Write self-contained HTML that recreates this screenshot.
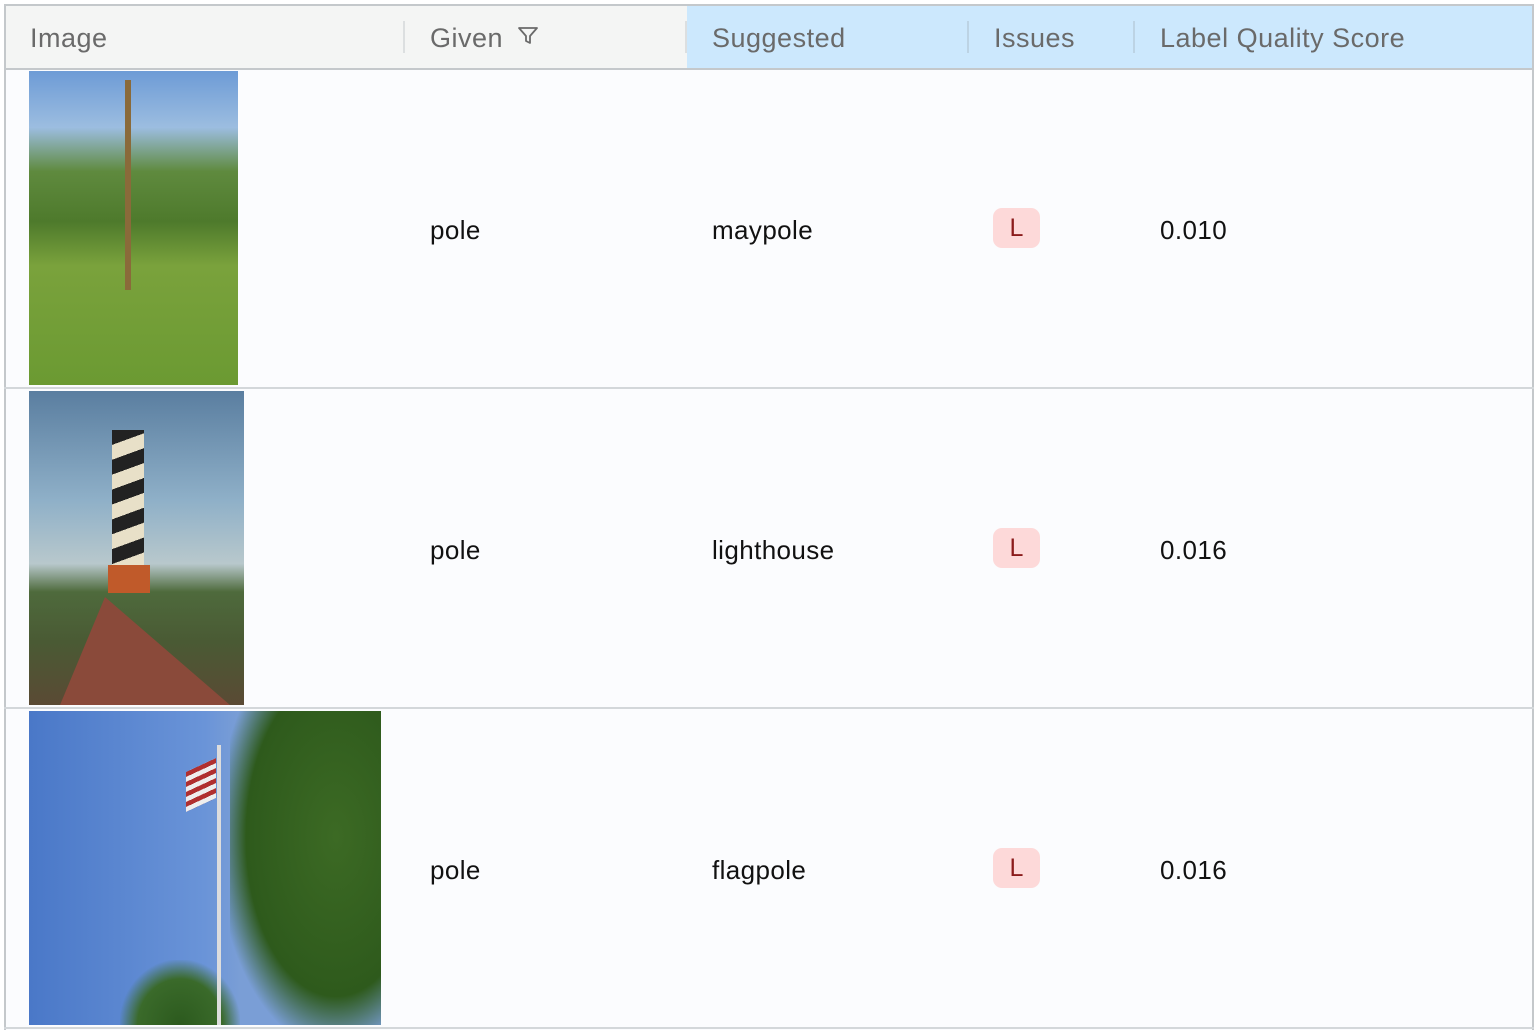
<!DOCTYPE html>
<html><head><style>
body{margin:0;width:1538px;height:1032px;background:#fff;font-family:"Liberation Sans",sans-serif;position:relative;overflow:hidden}
.a{position:absolute}
.h{font-size:27px;color:#6a6a6a;top:23px;letter-spacing:0.5px}
.t{font-size:26px;color:#111;letter-spacing:0.4px}
.badge{position:absolute;left:993px;width:47px;height:40px;background:#fdd9d9;border-radius:9px;color:#8b1c1c;font-size:25px;text-align:center;line-height:40px}
.sep{position:absolute;top:21px;width:2px;height:32px;background:#dcdfe0}
.hl{position:absolute;left:4px;width:1530px;height:2px;background:#d3d7da}
</style></head><body>
<div class="a" style="left:4px;top:4px;width:1530px;height:1026px;background:#fbfcfe;border-left:2px solid #c4c8cb;border-right:2px solid #c4c8cb;border-top:2px solid #c4c8cb;box-sizing:border-box"></div>
<div class="a" style="left:6px;top:6px;width:681px;height:63px;background:#f4f5f4"></div>
<div class="a" style="left:687px;top:6px;width:845px;height:63px;background:#cce8fd"></div>
<div class="hl" style="top:68px;background:#c4c8cb"></div>
<div class="sep" style="left:403px"></div>
<div class="sep" style="left:685px"></div>
<div class="sep" style="left:967px;background:#bcd3e4"></div>
<div class="sep" style="left:1133px;background:#bcd3e4"></div>
<div class="a h" style="left:30px">Image</div>
<div class="a h" style="left:430px">Given <svg width="22" height="22" viewBox="0 0 22 22" style="vertical-align:0px;margin-left:6px"><path d="M2 3h18l-7 8v7l-4-2v-5z" fill="none" stroke="#6a6a6a" stroke-width="1.8" stroke-linejoin="round"/></svg></div>
<div class="a h" style="left:712px">Suggested</div>
<div class="a h" style="left:994px">Issues</div>
<div class="a h" style="left:1160px">Label Quality Score</div>
<div class="hl" style="top:387px"></div>
<div class="hl" style="top:707px"></div>
<div class="hl" style="top:1027px"></div>

<div class="a" style="left:29px;top:71px;width:209px;height:314px;background:linear-gradient(180deg,#6d9bd6 0%,#9cbde0 18%,#5f8a3e 32%,#4e7a2c 48%,#7aa23c 62%,#6b9a32 100%)"></div>
<div class="a" style="left:125px;top:80px;width:6px;height:210px;background:#8a6a3a"></div>
<div class="a" style="left:29px;top:391px;width:215px;height:314px;background:linear-gradient(180deg,#5a7ea0 0%,#8fb0c8 35%,#b8c8cc 55%,#4e6a3c 64%,#4a5a34 80%,#5a4a34 100%)"></div>
<div class="a" style="left:112px;top:430px;width:32px;height:160px;background:repeating-linear-gradient(160deg,#222 0 14px,#e8e0c8 14px 28px)"></div>
<div class="a" style="left:108px;top:565px;width:42px;height:28px;background:#c05a2a"></div>
<div class="a" style="left:60px;top:597px;width:0;height:0;border-left:45px solid transparent;border-right:125px solid transparent;border-bottom:108px solid #8a4a3a"></div>
<div class="a" style="left:29px;top:711px;width:352px;height:314px;background:linear-gradient(90deg,#4a78c8 0%,#6a94d8 50%,#7a9ed6 60%)"></div>
<div class="a" style="left:230px;top:711px;width:151px;height:314px;background:radial-gradient(ellipse at 70% 40%,#3c6a24 0%,#2e5a1c 60%,transparent 80%)"></div>
<div class="a" style="left:120px;top:960px;width:120px;height:65px;background:radial-gradient(ellipse at 50% 100%,#2c5a1e 0%,#3a6a2a 50%,transparent 72%)"></div>
<div class="a" style="left:217px;top:745px;width:4px;height:280px;background:#ddd"></div>
<div class="a" style="left:186px;top:765px;width:30px;height:40px;background:repeating-linear-gradient(180deg,#b03030 0 5px,#eee 5px 10px);transform:skewY(-25deg)"></div>

<div class="a t" style="left:430px;top:215px">pole</div>
<div class="a t" style="left:712px;top:215px">maypole</div>
<div class="badge" style="top:208px">L</div>
<div class="a t" style="left:1160px;top:215px">0.010</div>

<div class="a t" style="left:430px;top:535px">pole</div>
<div class="a t" style="left:712px;top:535px">lighthouse</div>
<div class="badge" style="top:528px">L</div>
<div class="a t" style="left:1160px;top:535px">0.016</div>

<div class="a t" style="left:430px;top:855px">pole</div>
<div class="a t" style="left:712px;top:855px">flagpole</div>
<div class="badge" style="top:848px">L</div>
<div class="a t" style="left:1160px;top:855px">0.016</div>
</body></html>
